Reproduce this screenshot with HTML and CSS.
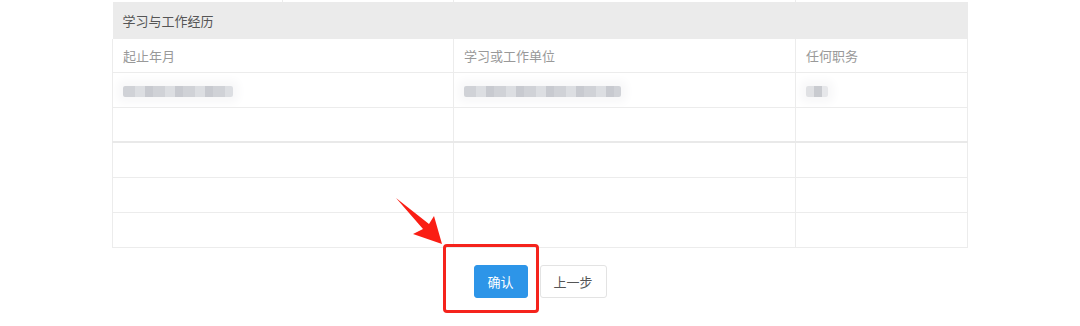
FILE: index.html
```html
<!DOCTYPE html>
<html lang="zh-CN">
<head>
  <meta charset="UTF-8">
  <title>学习与工作经历</title>
  <link rel="stylesheet" href="styles.css">
</head>
<body>
  <div class="page">
    <!-- tail of the table above -->
    <div class="prev-strip">
      <span class="prev-cell w1"></span>
      <span class="prev-cell w2"></span>
      <span class="prev-cell w3"></span>
      <span class="prev-cell w4"></span>
    </div>

    <table class="resume">
      <colgroup>
        <col class="c1">
        <col class="c2">
        <col class="c3">
      </colgroup>
      <tr class="title-row">
        <th colspan="3">学习与工作经历</th>
      </tr>
      <tr class="head-row">
        <td>起止年月</td>
        <td>学习或工作单位</td>
        <td>任何职务</td>
      </tr>
      <tr class="data-row">
        <td><span class="blur" style="width: 110px;"></span></td>
        <td><span class="blur" style="width: 157px;"></span></td>
        <td><span class="blur short" style="width: 22px;"></span></td>
      </tr>
      <tr class="split"><td></td><td></td><td></td></tr>
      <tr><td></td><td></td><td></td></tr>
      <tr><td></td><td></td><td></td></tr>
      <tr><td></td><td></td><td></td></tr>
    </table>

    <div class="actions">
      <button type="button" class="btn btn-primary">确认</button>
      <button type="button" class="btn btn-default">上一步</button>
    </div>

    <!-- annotation -->
    <div class="mark-box"></div>
    <svg class="mark-arrow" width="1080" height="326" viewBox="0 0 1080 326">
      <polygon points="396,198 429,224 434,216 442,244 413,234 423,229" fill="#fa1e14"/>
    </svg>
  </div>
</body>
</html>
```

FILE: styles.css
```css
body {
  margin: 0;
  background: #fff;
  font-family: "Noto Sans CJK SC", "Noto Sans", sans-serif;
  font-size: 13px;
}
.page {
  position: relative;
  width: 1080px;
  height: 326px;
  overflow: hidden;
}
.prev-strip {
  display: flex;
  height: 2px;
  margin-left: 112px;
  width: 854px;
}
.prev-cell {
  border-right: 1px solid #ececec;
}
.prev-cell.w1 { width: 170px; }
.prev-cell.w2 { width: 170px; }
.prev-cell.w3 { width: 341px; }
.prev-cell.w4 { width: 170px; border-right: none; }

.resume {
  margin-left: 112px;
  width: 855px;
  border-collapse: collapse;
  table-layout: fixed;
}
.resume col.c1 { width: 341px; }
.resume col.c2 { width: 342px; }
.resume col.c3 { width: 172px; }
.resume td {
  height: 34px;
  padding: 0 10px;
  border: 1px solid #ececec;
  color: #999;
  line-height: 18px;
  vertical-align: middle;
}
.title-row th {
  height: 37px;
  padding: 0 10px;
  background: #ebebeb;
  color: #555;
  font-weight: normal;
  text-align: left;
}
.head-row td {
  height: 33px;
  border-top: none;
}
.split td {
  height: 33px;
  border-bottom: 2px solid #e9e9e9;
}
.blur {
  display: block;
  height: 11px;
  margin-top: 2px;
  background: repeating-linear-gradient(90deg, #d0d2d7 0 12px, #dcdee2 12px 22px, #c8cad0 22px 30px);
  border-radius: 2px;
  box-shadow: 0 0 8px 6px #f8f8f9;
}
.blur.short {
  background: linear-gradient(90deg, #e0e1e4 0 8px, #c9cbd0 8px 16px, #e6e7ea 16px);
}

.actions {
  display: flex;
  justify-content: center;
  gap: 12px;
  margin-top: 17px;
}
.btn {
  box-sizing: border-box;
  height: 33px;
  padding: 0;
  border-radius: 3px;
  font-family: inherit;
  font-size: 13px;
  white-space: nowrap;
  cursor: pointer;
}
.btn-primary {
  width: 54px;
  background: #2d95e8;
  border: 1px solid #2d95e8;
  color: #fff;
}
.btn-default {
  width: 67px;
  background: #fff;
  border: 1px solid #e3e3e3;
  color: #555;
}

.mark-box {
  position: absolute;
  left: 443px;
  top: 244px;
  width: 90px;
  height: 63px;
  border: 3px solid #f5231c;
  border-radius: 4px;
}
.mark-arrow {
  position: absolute;
  left: 0;
  top: 0;
  pointer-events: none;
}
```
